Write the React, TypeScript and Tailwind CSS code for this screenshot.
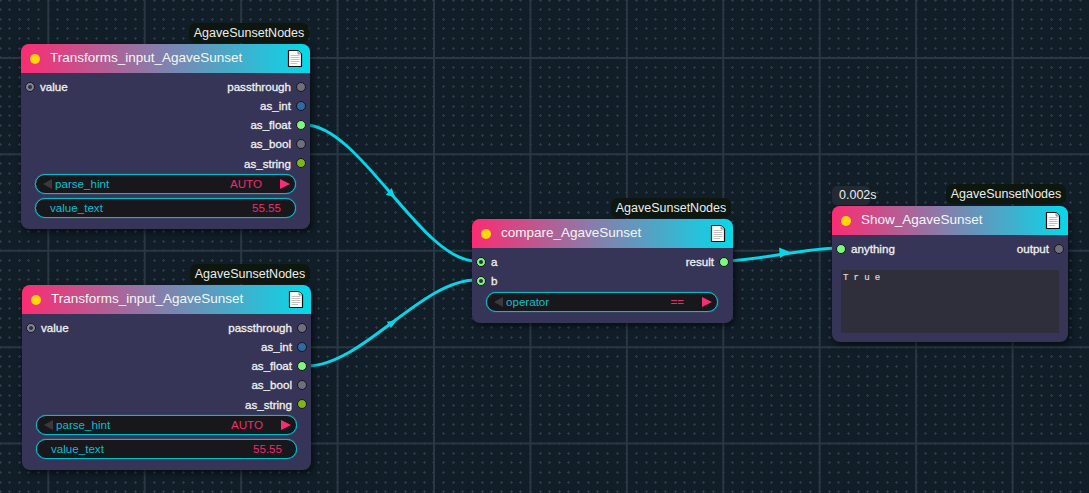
import React from "react";

const FONT = "font-['Liberation_Sans',Arial,sans-serif]";

// small plus marks of the canvas, snapped to whole pixels so they stay crisp
function plusMarks() {
  let d = "";
  for (let i = 0; i * 9.643 < 1089; i++) {
    for (let j = 0; j * 9.643 < 493; j++) {
      const x = Math.floor(i * 9.643) + 0.5;
      const y = Math.floor(j * 9.643) + 0.5;
      d += `M${x} ${y - 1.5}V${y + 1.5}M${x - 1.5} ${y}H${x + 1.5}`;
    }
  }
  return d;
}

function DocIcon() {
  return (
    <svg width="16" height="19" viewBox="0 0 16 19" className="shrink-0">
      <path d="M1.5 1.5H11L14.5 5V17.5H1.5Z" fill="#fff" stroke="#111" strokeWidth="1.2" />
      <path d="M11 1.5V5H14.5" fill="#d8d8d8" stroke="#555" strokeWidth="0.6" />
      <path d="M3.5 6.5H12.5M3.5 8.5H12.5M3.5 10.5H12.5M3.5 12.5H12.5M3.5 14.5H10" stroke="#bbb" strokeWidth="0.9" />
    </svg>
  );
}

function Slot({ color, hollow }: { color: string; hollow?: boolean }) {
  return (
    <span className={`flex h-[10px] w-[10px] shrink-0 items-center justify-center rounded-full border border-[#15151f] ${color}`}>
      {hollow && <span className="h-[4px] w-[4px] rounded-full bg-[#2f2f45]" />}
    </span>
  );
}

function Row({
  left,
  leftColor,
  hollow,
  right,
  rightColor,
}: {
  left?: string;
  leftColor?: string;
  hollow?: boolean;
  right?: string;
  rightColor?: string;
}) {
  return (
    <div className="flex h-[19.2px] items-center justify-between px-[4px] text-[11.6px] text-[#f0f0f0] [-webkit-text-stroke:0.3px_#f0f0f0]">
      <div className="flex items-center gap-[5px]">
        {left && <Slot color={leftColor!} hollow={hollow} />}
        {left && <span>{left}</span>}
      </div>
      <div className="flex items-center gap-[5px]">
        {right && <span>{right}</span>}
        {right && <Slot color={rightColor!} />}
      </div>
    </div>
  );
}

function Combo({ label, value }: { label: string; value: string }) {
  return (
    <div className="flex h-[20px] items-center rounded-full border border-[#06b9cc] bg-[#17171c] pl-[7px] pr-[5px] text-[11.6px] shadow-[0_0_1px_#06d6e8]">
      <span className="h-0 w-0 border-y-[5px] border-r-[9px] border-y-transparent border-r-[#3a3a3d]" />
      <span className="mb-[1px] ml-[3px] text-[#06bdd0]">{label}</span>
      <span className="mb-[1px] ml-auto text-[#ee2a6e]">{value}</span>
      <span className="ml-[18px] h-0 w-0 border-y-[5px] border-l-[10px] border-y-transparent border-l-[#f72f72]" />
    </div>
  );
}

function TextField({ label, value }: { label: string; value: string }) {
  return (
    <div className="flex h-[20px] items-center justify-between rounded-full border border-[#06b9cc] bg-[#17171c] pb-[1px] pl-[14px] pr-[14px] text-[11.6px] shadow-[0_0_1px_#06d6e8]">
      <span className="text-[#06bdd0]">{label}</span>
      <span className="text-[#ee2a6e]">{value}</span>
    </div>
  );
}

function GraphNode({
  title,
  place,
  badgeClass,
  children,
}: {
  title: string;
  place: string;
  badgeClass: string;
  children: React.ReactNode;
}) {
  return (
    <div className={`absolute rounded-[8px] bg-[#363557] shadow-[2px_3px_6px_rgba(0,0,0,0.55)] ${place}`}>
      <div className={`absolute flex h-[20px] w-[120px] items-center justify-center rounded-[7px] bg-[#0d1710] text-[12.5px] text-[#ececec] ${badgeClass}`}>
        AgaveSunsetNodes
      </div>
      <div className="flex h-[29px] items-center rounded-t-[8px] bg-[linear-gradient(90deg,#fb2c72,#05d9ea)] pl-[9px] pr-[7px]">
        <span className="h-[10px] w-[10px] rounded-full bg-[#ffd60a]" />
        <span className="ml-[10px] text-[13.5px] text-[#f6f6f6]">{title}</span>
        <span className="ml-auto">
          <DocIcon />
        </span>
      </div>
      <div className="pt-[4px]">{children}</div>
    </div>
  );
}

function TransformsNode({ place }: { place: string }) {
  return (
    <GraphNode title="Transforms_input_AgaveSunset" place={place} badgeClass="-top-[21px] right-[1px]">
      <Row left="value" leftColor="bg-[#85858f]" hollow right="passthrough" rightColor="bg-[#6f6f7b]" />
      <Row right="as_int" rightColor="bg-[#2c6ca3]" />
      <Row right="as_float" rightColor="bg-[#7cf97c]" />
      <Row right="as_bool" rightColor="bg-[#6f6f7b]" />
      <Row right="as_string" rightColor="bg-[#7cb518]" />
      <div className="mt-[1.5px] flex flex-col gap-[4px] pb-[11px] pl-[14px] pr-[14px]">
        <Combo label="parse_hint" value="AUTO" />
        <TextField label="value_text" value="55.55" />
      </div>
    </GraphNode>
  );
}

export default function App() {
  return (
    <div className={`relative h-[493px] w-[1089px] overflow-hidden bg-[#111d27] ${FONT}`}>
      <svg className="absolute inset-0" width="1089" height="493">
        <path d={plusMarks()} stroke="#2b3a47" strokeWidth="1" fill="none" />
        <path
          d="M48.3 0V493M144.7 0V493M241.1 0V493M337.6 0V493M434 0V493M530.4 0V493M626.9 0V493M723.3 0V493M819.7 0V493M916.1 0V493M1012.6 0V493M0 57.9H1089M0 154.3H1089M0 250.7H1089M0 347.2H1089M0 443.6H1089"
          stroke="#283844"
          strokeWidth="2"
        />
        <g fill="none" stroke="#06d6e8" strokeWidth="3">
          <path d="M305 125C360 125 421 261 476 261" />
          <path d="M307 366C362 366 421 280 476 280" />
          <path d="M724 261C752 261 809 248 837 248" />
        </g>
        <g fill="#06d6e8">
          <path d="M395 197L385.7 195L391.7 188Z" />
          <path d="M386.7 321.7L397 320L391 328Z" />
          <path d="M790 252L779 247.5L780 258Z" />
        </g>
      </svg>

      <TransformsNode place="left-[21px] top-[44px] w-[289px]" />
      <TransformsNode place="left-[22px] top-[285px] w-[289px]" />

      <GraphNode title="compare_AgaveSunset" place="left-[472px] top-[219px] w-[261px]" badgeClass="-top-[21px] right-[2px]">
        <Row left="a" leftColor="bg-[#7cf97c]" hollow right="result" rightColor="bg-[#7cf97c]" />
        <Row left="b" leftColor="bg-[#7cf97c]" hollow />
        <div className="mt-[1.5px] pb-[11px] pl-[14px] pr-[15px]">
          <Combo label="operator" value="==" />
        </div>
      </GraphNode>

      <GraphNode title="Show_AgaveSunset" place="left-[832px] top-[206px] w-[236px]" badgeClass="-top-[22px] right-[2px]">
        <div className="absolute -top-[20px] left-0 flex h-[19px] w-[38px] items-center whitespace-nowrap rounded-[5px] bg-[#222b34] pl-[7px] text-[12.5px] text-[#ececec]">
          0.002s
        </div>
        <Row left="anything" leftColor="bg-[#7cf97c]" right="output" rightColor="bg-[#6f6f7b]" />
        <div className="mx-[9px] mb-[9px] mt-[11.5px] h-[63px] bg-[#2f2f3b] pl-[2px] pt-[2px] font-['Liberation_Mono',monospace] text-[9px] leading-[12px] tracking-[5.2px] text-[#dddddd] [-webkit-text-stroke:0.2px_#dddddd]">
          True
        </div>
      </GraphNode>
    </div>
  );
}
